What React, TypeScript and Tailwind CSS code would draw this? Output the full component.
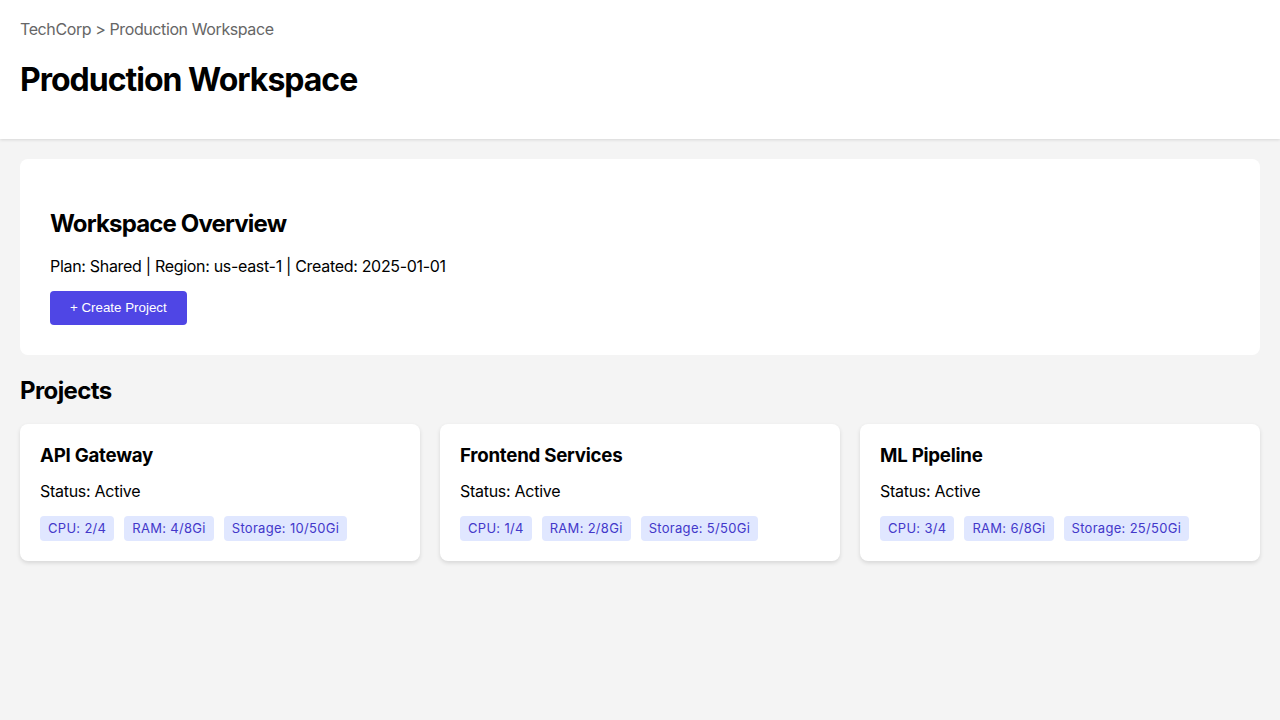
import React from 'react';

interface Project {
  name: string;
  status: string;
  cpu: string;
  ram: string;
  storage: string;
}

const projects: Project[] = [
  { name: 'API Gateway', status: 'Active', cpu: '2/4', ram: '4/8Gi', storage: '10/50Gi' },
  { name: 'Frontend Services', status: 'Active', cpu: '1/4', ram: '2/8Gi', storage: '5/50Gi' },
  { name: 'ML Pipeline', status: 'Active', cpu: '3/4', ram: '6/8Gi', storage: '25/50Gi' },
];

function Badge({ children }: { children: React.ReactNode }) {
  return (
    <span className="h-[25px] px-2 flex items-center rounded bg-[#e0e7ff] text-[13px] tracking-[0.3px] text-[#4338ca]">
      {children}
    </span>
  );
}

function ProjectCard({ project }: { project: Project; key?: React.Key }) {
  return (
    <div className="bg-white rounded-lg p-5 shadow-[0_2px_4px_rgba(0,0,0,0.12)]">
      <h3 className="text-[18.7px] font-bold leading-[23px] tracking-[-0.25px] text-black">{project.name}</h3>
      <p className="mt-[15px] text-base leading-[19px] tracking-[-0.28px] text-black">Status: {project.status}</p>
      <div className="mt-[15px] flex gap-[10px]">
        <Badge>CPU: {project.cpu}</Badge>
        <Badge>RAM: {project.ram}</Badge>
        <Badge>Storage: {project.storage}</Badge>
      </div>
    </div>
  );
}

export default function App() {
  return (
    <div className="min-h-[720px] bg-[#f4f4f4] font-['Inter',sans-serif] text-black">
      <header className="bg-white px-5 pt-5 pb-[40px] shadow-[0_1px_3px_rgba(0,0,0,0.12)]">
        <div className="text-base leading-[19px] tracking-[-0.4px] text-[#666]">TechCorp &gt; Production Workspace</div>
        <h1 className="mt-[21px] text-[32px] font-bold leading-[39px] tracking-[-1px]">Production Workspace</h1>
      </header>

      <main className="p-5">
        <section className="bg-white rounded-lg px-[30px] pt-[50px] pb-[30px]">
          <h2 className="text-2xl font-bold leading-[29px] tracking-[-0.85px]">Workspace Overview</h2>
          <p className="mt-[19px] text-base leading-[19px] tracking-[-0.31px]">
            Plan: Shared | Region: us-east-1 | Created: 2025-01-01
          </p>
          <button className="mt-[15px] h-[34px] px-5 rounded bg-[#4f46e5] text-white text-[13.33px] font-['Liberation_Sans',Arial,sans-serif]">
            + Create Project
          </button>
        </section>

        <h2 className="mt-[21px] text-2xl font-bold leading-[29px] tracking-[-0.6px]">Projects</h2>

        <div className="mt-[19px] grid grid-cols-3 gap-5">
          {projects.map((p) => (
            <ProjectCard key={p.name} project={p} />
          ))}
        </div>
      </main>
    </div>
  );
}
